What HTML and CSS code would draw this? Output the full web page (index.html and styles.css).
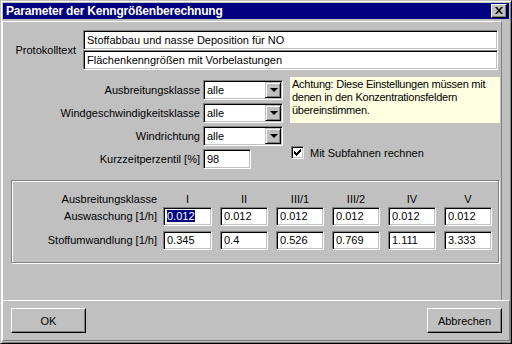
FILE: index.html
```
<!DOCTYPE html>
<html>
<head>
<meta charset="utf-8">
<link rel="stylesheet" href="styles.css">
</head>
<body>
<div class="window">
  <div class="titlebar">
    <span class="title">Parameter der Kenngrößenberechnung</span>
    <span class="close"><svg width="8" height="7" viewBox="0 0 8 7"><path d="M0 0h2l2 2.5L6 0h2L5 3.5 8 7H6L4 4.5 2 7H0l3-3.5z" fill="#000"/></svg></span>
  </div>
  <div class="main">
    <div class="proto">
      <div class="proto-label">Protokolltext</div>
      <div class="proto-boxes">
        <div class="field wide">Stoffabbau und nasse Deposition für NO</div>
        <div class="field wide">Flächenkenngrößen mit Vorbelastungen</div>
      </div>
    </div>
    <div class="settings">
      <div class="form">
        <div class="flabel">Ausbreitungsklasse</div>
        <div class="combo"><span class="ctext">alle</span><span class="cbtn"><span class="tri"></span></span></div>
        <div class="flabel">Windgeschwindigkeitsklasse</div>
        <div class="combo"><span class="ctext">alle</span><span class="cbtn"><span class="tri"></span></span></div>
        <div class="flabel">Windrichtung</div>
        <div class="combo"><span class="ctext">alle</span><span class="cbtn"><span class="tri"></span></span></div>
        <div class="flabel">Kurzzeitperzentil [%]</div>
        <div class="field short">98</div>
      </div>
      <div class="side">
        <div class="note">Achtung: Diese Einstellungen müssen mit denen in den Konzentrationsfeldern übereinstimmen.</div>
        <div class="check-row">
          <span class="checkbox"><svg width="7" height="7" viewBox="0 0 7 7"><path d="M0 2h1v1h1v1h1V3h1V2h1V1h1V0h1v3H6v1H5v1H4v1H3v1H2V6H1V5H0z" fill="#000"/></svg></span>
          <span>Mit Subfahnen rechnen</span>
        </div>
      </div>
    </div>
    <div class="group">
      <div class="grid">
        <div class="hlabel">Ausbreitungsklasse</div>
        <div class="hcol">I</div>
        <div class="hcol">II</div>
        <div class="hcol">III/1</div>
        <div class="hcol">III/2</div>
        <div class="hcol">IV</div>
        <div class="hcol">V</div>

        <div class="rlabel">Auswaschung [1/h]</div>
        <div class="field cell"><span class="sel">0.012</span></div>
        <div class="field cell">0.012</div>
        <div class="field cell">0.012</div>
        <div class="field cell">0.012</div>
        <div class="field cell">0.012</div>
        <div class="field cell">0.012</div>

        <div class="rlabel">Stoffumwandlung [1/h]</div>
        <div class="field cell">0.345</div>
        <div class="field cell">0.4</div>
        <div class="field cell">0.526</div>
        <div class="field cell">0.769</div>
        <div class="field cell">1.111</div>
        <div class="field cell">3.333</div>
      </div>
    </div>
  </div>
  <div class="footer">
    <div class="button">OK</div>
    <div class="button">Abbrechen</div>
  </div>
</div>
</body>
</html>
```
FILE: styles.css
```
* { box-sizing: border-box; }
html, body { margin: 0; padding: 0; background: #c0c0c0; }
body {
  font-family: "Liberation Sans", Arial, sans-serif;
  font-size: 11px;
  color: #000;
}
.window {
  width: 512px;
  height: 344px;
  border: 1px solid;
  border-color: #c0c0c0 #000 #000 #c0c0c0;
  box-shadow: inset 1px 1px #fff, inset -1px -1px #808080;
  padding: 1px 1px 2px 1px;
  background: #c0c0c0;
  display: flex;
  flex-direction: column;
}
.titlebar {
  margin: 1px 1px 2px 1px;
  height: 16px;
  background: #000080;
  color: #fff;
  display: flex;
  align-items: center;
  justify-content: space-between;
  padding: 0 2px 0 3px;
}
.title {
  font-weight: bold;
  font-size: 12px;
  letter-spacing: -0.2px;
  line-height: 16px;
}
.close {
  width: 16px;
  height: 14px;
  background: #c0c0c0;
  border: 1px solid;
  border-color: #fff #000 #000 #fff;
  box-shadow: inset -1px -1px #808080;
  display: flex;
  align-items: center;
  justify-content: center;
  padding-bottom: 1px;
}
.main {
  width: 500px;
  height: 279px;
  border-left: 1px solid #fff;
  border-top: 1px solid #fff;
  border-right: 1px solid #808080;
  display: flex;
  flex-direction: column;
}
.field {
  background: #fff;
  border: 1px solid;
  border-color: #808080 #fff #fff #808080;
  box-shadow: inset 1px 1px #000, inset -1px -1px #c0c0c0;
  padding: 0 3px;
  white-space: nowrap;
  overflow: hidden;
}
.proto {
  display: flex;
  align-items: center;
  gap: 7px;
  margin-top: 8px;
}
.proto-label {
  width: 73px;
  text-align: right;
}
.proto-boxes {
  display: flex;
  flex-direction: column;
  width: 415px;
}
.wide {
  height: 20px;
  line-height: 18px;
}
.settings {
  display: flex;
  margin-top: 7px;
  gap: 7px;
}
.form {
  padding-top: 3px;
  display: grid;
  grid-template-columns: 197px 80px;
  grid-auto-rows: 20px;
  column-gap: 3px;
  row-gap: 3px;
  align-items: center;
}
.flabel {
  text-align: right;
  white-space: nowrap;
}
.combo {
  height: 20px;
  background: #fff;
  border: 1px solid;
  border-color: #808080 #fff #fff #808080;
  box-shadow: inset 1px 1px #000, inset -1px -1px #c0c0c0;
  display: flex;
  align-items: center;
  justify-content: space-between;
  padding: 1px;
}
.ctext { padding-left: 2px; line-height: 16px; }
.cbtn {
  width: 16px;
  height: 16px;
  background: #c0c0c0;
  border: 1px solid;
  border-color: #c0c0c0 #000 #000 #c0c0c0;
  box-shadow: inset 1px 1px #fff, inset -1px -1px #808080;
  display: flex;
  align-items: center;
  justify-content: center;
}
.tri {
  width: 0;
  height: 0;
  border-left: 4px solid transparent;
  border-right: 4px solid transparent;
  border-top: 4px solid #000;
  margin-left: 1px;
}
.short {
  width: 48px;
  height: 20px;
  line-height: 18px;
}
.side {
  display: flex;
  flex-direction: column;
}
.note {
  width: 210px;
  height: 46px;
  background: #ffffe1;
  padding: 1px 2px;
  line-height: 13px;
  font-size: 11px;
  letter-spacing: -0.25px;
}
.check-row {
  display: flex;
  align-items: center;
  gap: 6px;
  margin-top: 23px;
  margin-left: 1px;
}
.checkbox {
  width: 13px;
  height: 13px;
  background: #fff;
  border: 1px solid;
  border-color: #808080 #fff #fff #808080;
  box-shadow: inset 1px 1px #000, inset -1px -1px #c0c0c0;
  display: flex;
  align-items: center;
  justify-content: center;
}
.group {
  margin: 11px 0 0 8px;
  width: 488px;
  height: 83px;
  border: 1px solid #808080;
  box-shadow: inset 1px 1px #fff, 1px 1px #fff;
  padding-top: 10px;
}
.grid {
  display: grid;
  grid-template-columns: 144px repeat(6, 48px);
  grid-template-rows: 16px 24px 19px;
  column-gap: 8px;
  align-items: start;
}
.grid .hlabel, .grid .rlabel { margin-right: -1px; }
.grid > div:nth-child(7n+2) { margin-left: -1px; }
.hlabel {
  text-align: right;
  line-height: 16px;
  white-space: nowrap;
}
.hcol {
  text-align: center;
  line-height: 16px;
}
.rlabel {
  text-align: right;
  line-height: 19px;
  white-space: nowrap;
}
.cell {
  height: 19px;
  line-height: 17px;
}
.sel {
  background: #000080;
  color: #fff;
}
.footer {
  flex: 1;
  border-top: 1px solid #fff;
  border-left: 1px solid #fff;
  border-right: 1px solid #808080;
  border-bottom: 1px solid #808080;
  display: flex;
  justify-content: space-between;
  align-items: flex-start;
  padding: 7px 7px 0 8px;
}
.button {
  width: 75px;
  height: 25px;
  border: 1px solid;
  border-color: #fff #000 #000 #fff;
  box-shadow: inset -1px -1px #808080;
  display: flex;
  align-items: center;
  justify-content: center;
}
```
